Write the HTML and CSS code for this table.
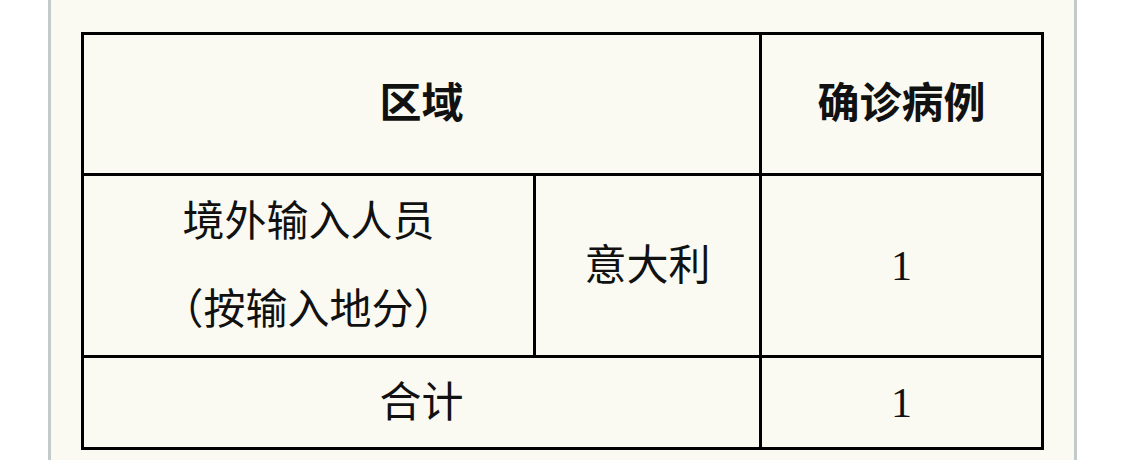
FILE: index.html
```html
<!DOCTYPE html>
<html lang="zh-CN">
<head>
<meta charset="utf-8">
<link rel="stylesheet" href="styles.css">
</head>
<body>
<div class="panel">
  <div class="grid">
    <div class="cell head span2">区域</div>
    <div class="cell head">确诊病例</div>
    <div class="cell two">境外输入人员<br>（按输入地分）</div>
    <div class="cell">意大利</div>
    <div class="cell">1</div>
    <div class="cell span2">合计</div>
    <div class="cell">1</div>
  </div>
</div>
</body>
</html>
```
FILE: styles.css
```css
html, body {
  margin: 0;
  padding: 0;
  background: #ffffff;
}
body {
  width: 1125px;
  height: 460px;
  overflow: hidden;
}
.panel {
  margin-left: 48px;
  width: 1023px;
  height: 460px;
  box-sizing: border-box;
  border-left: 3px solid #c3caca;
  border-right: 3px solid #c3caca;
  background: #fafaf3;
  padding-top: 32px;
  padding-left: 30px;
  width: 1029px;
}
.grid {
  display: grid;
  width: 963px;
  box-sizing: border-box;
  grid-template-columns: 449px 223px 279px;
  grid-template-rows: 138px 179px 89px;
  gap: 3px;
  padding: 3px;
  background: #000;
}
.cell {
  background: #fafaf3;
  display: flex;
  align-items: center;
  justify-content: center;
  text-align: center;
  font-family: "Liberation Serif", "Noto Sans CJK SC", serif;
  font-size: 42px;
  line-height: 88px;
  color: #111;
}
.span2 {
  grid-column: span 2;
}
.head {
  font-weight: 700;
}
```
